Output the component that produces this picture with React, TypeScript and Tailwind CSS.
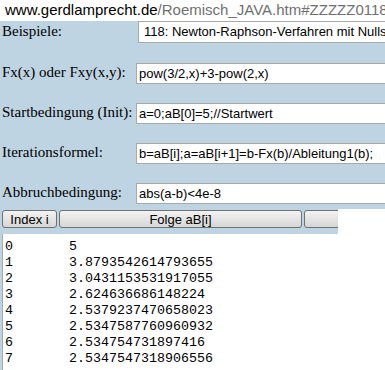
import React from "react";

const rows = [
  { label: "Fx(x) oder Fxy(x,y):", value: "pow(3/2,x)+3-pow(2,x)" },
  { label: "Startbedingung (Init):", value: "a=0;aB[0]=5;//Startwert" },
  { label: "Iterationsformel:", value: "b=aB[i];a=aB[i+1]=b-Fx(b)/Ableitung1(b);" },
  { label: "Abbruchbedingung:", value: "abs(a-b)<4e-8" },
];

const folge = [
  ["0", "5"],
  ["1", "3.8793542614793655"],
  ["2", "3.0431153531917055"],
  ["3", "2.624636686148224"],
  ["4", "2.5379237470658023"],
  ["5", "2.5347587760960932"],
  ["6", "2.534754731897416"],
  ["7", "2.5347547318906556"],
];

const btn =
  "h-[18px] shrink-0 rounded-[3px] border border-[#707070] bg-gradient-to-b from-[#f3f3f3] to-[#d6d6d6] text-[13px] leading-none text-black font-['Liberation_Sans',Arial,sans-serif]";

export default function App() {
  return (
    <div className="w-[385px] h-[370px] overflow-hidden bg-white">
      {/* address bar */}
      <div className="h-[21px] bg-white pl-[5px] pt-[1px] whitespace-nowrap overflow-hidden text-[15px] leading-[18px] font-['Liberation_Sans',Arial,sans-serif]">
        <span className="text-black">www.gerdlamprecht.de</span>
        <span className="text-[#707070]">/Roemisch_JAVA.htm#ZZZZZ0118</span>
      </div>

      {/* form */}
      <div className="bg-[#bfd4e3] pb-[5px] flex flex-col">
        <div className="flex items-center h-[22px] whitespace-nowrap">
          <span className="w-[138px] shrink-0 pl-[2px] -mt-[2px] text-[15px] text-black font-['Liberation_Serif','Times_New_Roman',serif]">
            Beispiele:
          </span>
          <div className="h-[22px] w-[300px] shrink-0 border border-[#a9a9a9] bg-white pl-[5px] text-[13px] leading-[20px] text-black overflow-hidden font-['Liberation_Sans',Arial,sans-serif]">
            118: Newton-Raphson-Verfahren mit Nullst
          </div>
        </div>
        {rows.map((r, i) => (
          <div
            key={r.label}
            className={`flex items-center h-[21px] whitespace-nowrap ${i === 0 ? "mt-[20px]" : "mt-[19px]"}`}
          >
            <span className="w-[136px] shrink-0 pl-[2px] -mt-[2px] text-[15px] text-black font-['Liberation_Serif','Times_New_Roman',serif]">
              {r.label}
            </span>
            <div className="h-[21px] w-[300px] shrink-0 border border-[#a9a9a9] bg-white pl-[2px] text-[13px] leading-[19px] text-black font-['Liberation_Sans',Arial,sans-serif]">
              {r.value}
            </div>
          </div>
        ))}
      </div>

      {/* buttons */}
      <div className="flex h-[25px]">
        <div className="w-[338px] shrink-0 overflow-hidden bg-[#bfd4e3] flex gap-[2px] pl-[2px] pt-[1px]">
          <button className={`${btn} w-[55px]`}>Index i</button>
          <button className={`${btn} w-[243px]`}>Folge aB[i]</button>
          <button className={`${btn} w-[60px]`} />
        </div>
        <div className="flex-1 bg-white" />
      </div>

      {/* output */}
      <div className="flex h-[200px] bg-[#bfd4e3]">
        <div className="ml-[2px] flex-1 border-l border-[#a9a9a9] bg-white pl-[2px] pt-[5px]">
          {folge.map(([i, v]) => (
            <div
              key={i}
              className="h-[16px] leading-[16px] whitespace-pre [tab-size:8] text-[13.33px] text-black font-['Liberation_Mono','Courier_New',monospace]"
            >
              {i + "\t" + v}
            </div>
          ))}
        </div>
      </div>
    </div>
  );
}
